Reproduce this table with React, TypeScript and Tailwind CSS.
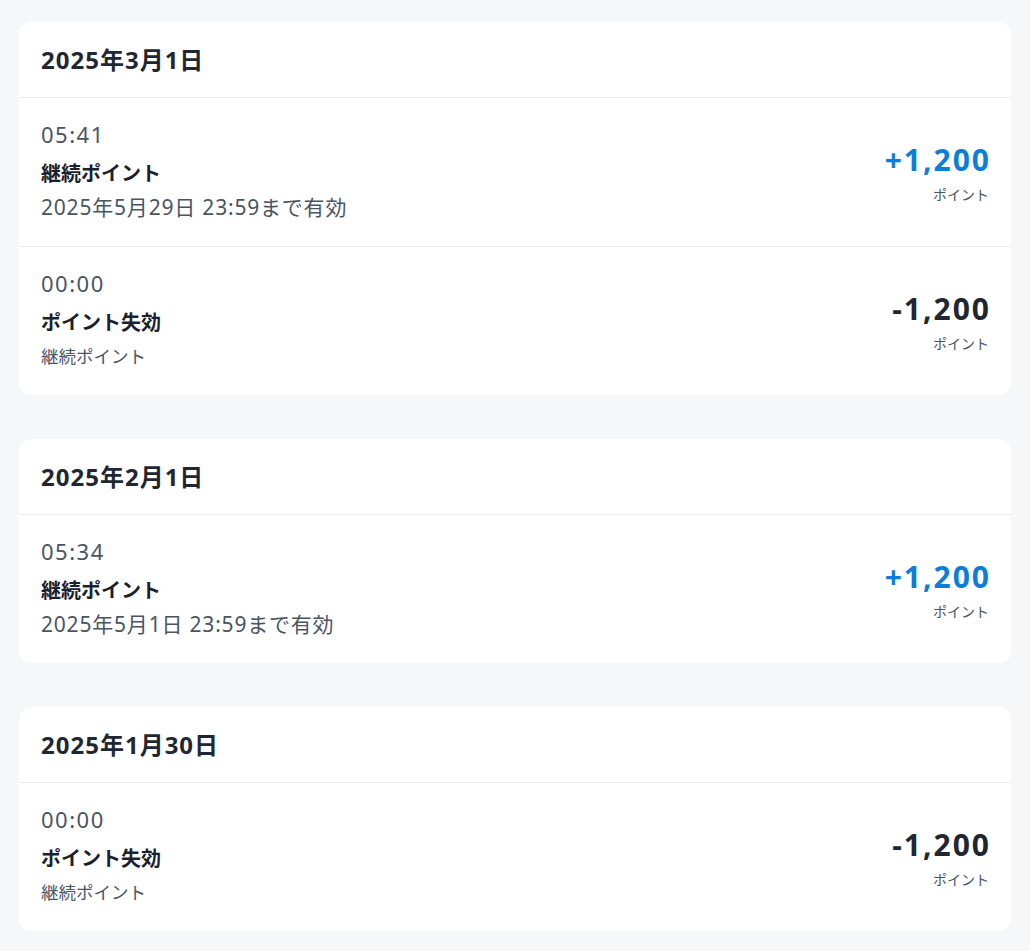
import React from "react";

type Row = {
  time: string;
  title: string;
  sub: string;
  subSmall?: boolean;
  amount: string;
  positive: boolean;
};

type Group = { date: string; rows: Row[] };

const groups: Group[] = [
  {
    date: "2025年3月1日",
    rows: [
      { time: "05:41", title: "継続ポイント", sub: "2025年5月29日 23:59まで有効", amount: "+1,200", positive: true },
      { time: "00:00", title: "ポイント失効", sub: "継続ポイント", subSmall: true, amount: "-1,200", positive: false },
    ],
  },
  {
    date: "2025年2月1日",
    rows: [
      { time: "05:34", title: "継続ポイント", sub: "2025年5月1日 23:59まで有効", amount: "+1,200", positive: true },
    ],
  },
  {
    date: "2025年1月30日",
    rows: [
      { time: "00:00", title: "ポイント失効", sub: "継続ポイント", subSmall: true, amount: "-1,200", positive: false },
    ],
  },
];

export default function App() {
  return (
    <div
      className="min-h-screen bg-[#f6f7f9] px-[19px] pt-[22px] pb-[22px] flex flex-col gap-[44px]"
      style={{ fontFamily: '"Noto Sans", "Noto Sans CJK JP", sans-serif' }}
    >
      {groups.map((g) => (
        <div key={g.date} className="bg-white rounded-xl overflow-hidden">
          <div className="h-[76px] flex items-center px-[22px] border-b border-[#e8eaed]">
            <span className="text-[24px] tracking-[1px] font-bold text-[#1f2733]">{g.date}</span>
          </div>
          {g.rows.map((r, i) => (
            <div
              key={i}
              className={`flex items-center justify-between px-[22px] pt-5 pb-[21px] ${
                i < g.rows.length - 1 ? "border-b border-[#e8eaed]" : ""
              }`}
            >
              <div className="flex flex-col">
                <span className="text-[22px] tracking-[1.5px] leading-8 text-[#4a5563]">{r.time}</span>
                <span className="text-[20px] leading-9 mt-[6px] font-bold text-[#1a202c]">{r.title}</span>
                {r.subSmall ? (
                  <span className="text-[17.5px] leading-9 mt-[-3px] text-[#4a5563]">{r.sub}</span>
                ) : (
                  <span className="text-[21px] tracking-[0.8px] leading-9 mt-[-3px] text-[#4a5563]">{r.sub}</span>
                )}
              </div>
              <div className="flex flex-col items-end pt-[4px]">
                <span
                  className={`text-[30px] tracking-[2px] leading-[40px] font-bold mr-[-2px] ${
                    r.positive ? "text-[#0a7ed9]" : "text-[#1f2733]"
                  }`}
                >
                  {r.amount}
                </span>
                <span className="text-[14px] leading-6 mt-[3px] text-[#4a5563]">ポイント</span>
              </div>
            </div>
          ))}
        </div>
      ))}
    </div>
  );
}
